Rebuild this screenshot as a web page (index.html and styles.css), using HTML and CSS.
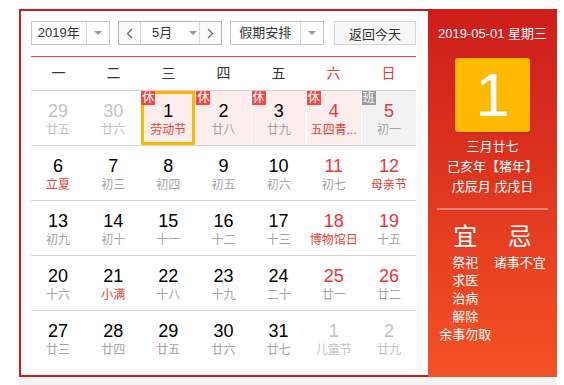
FILE: index.html
```html
<!DOCTYPE html>
<html>
<head>
  <meta charset="utf-8">
  <title>万年历</title>
  <link rel="stylesheet" href="styles.css">
</head>
<body>
  <div class="calendar">
    <div class="main">
      <div class="toolbar">
        <div class="select year">
          <span class="select-text">2019年</span>
          <span class="select-arrow"><i class="tri"></i></span>
        </div>
        <div class="select month">
          <span class="nav-btn">
            <svg width="7" height="11" viewBox="0 0 7 11"><polyline points="6,1 1.5,5.5 6,10" fill="none" stroke="#666" stroke-width="1.2"/></svg>
          </span>
          <span class="month-text">5月<i class="tri"></i></span>
          <span class="nav-btn right">
            <svg width="7" height="11" viewBox="0 0 7 11"><polyline points="1,1 5.5,5.5 1,10" fill="none" stroke="#666" stroke-width="1.2"/></svg>
          </span>
        </div>
        <div class="select holiday">
          <span class="select-text">假期安排</span>
          <span class="select-arrow"><i class="tri"></i></span>
        </div>
        <button class="today-btn">返回今天</button>
      </div>

      <div class="weekdays">
        <span>一</span><span>二</span><span>三</span><span>四</span><span>五</span>
        <span class="red">六</span><span class="red">日</span>
      </div>

      <div class="weeks">
        <div class="week">
          <div class="day other"><b>29</b><em>廿五</em></div>
          <div class="day other"><b>30</b><em>廿六</em></div>
          <div class="day rest selected"><i class="tag">休</i><b>1</b><em class="fest">劳动节</em></div>
          <div class="day rest"><i class="tag">休</i><b>2</b><em>廿八</em></div>
          <div class="day rest"><i class="tag">休</i><b>3</b><em>廿九</em></div>
          <div class="day rest weekend"><i class="tag">休</i><b>4</b><em class="fest" title="五四青年节">五四青...</em></div>
          <div class="day work weekend"><i class="tag">班</i><b>5</b><em>初一</em></div>
        </div>
        <div class="week">
          <div class="day"><b>6</b><em class="fest">立夏</em></div>
          <div class="day"><b>7</b><em>初三</em></div>
          <div class="day"><b>8</b><em>初四</em></div>
          <div class="day"><b>9</b><em>初五</em></div>
          <div class="day"><b>10</b><em>初六</em></div>
          <div class="day weekend"><b>11</b><em>初七</em></div>
          <div class="day weekend"><b>12</b><em class="fest">母亲节</em></div>
        </div>
        <div class="week">
          <div class="day"><b>13</b><em>初九</em></div>
          <div class="day"><b>14</b><em>初十</em></div>
          <div class="day"><b>15</b><em>十一</em></div>
          <div class="day"><b>16</b><em>十二</em></div>
          <div class="day"><b>17</b><em>十三</em></div>
          <div class="day weekend"><b>18</b><em class="fest">博物馆日</em></div>
          <div class="day weekend"><b>19</b><em>十五</em></div>
        </div>
        <div class="week">
          <div class="day"><b>20</b><em>十六</em></div>
          <div class="day"><b>21</b><em class="fest">小满</em></div>
          <div class="day"><b>22</b><em>十八</em></div>
          <div class="day"><b>23</b><em>十九</em></div>
          <div class="day"><b>24</b><em>二十</em></div>
          <div class="day weekend"><b>25</b><em>廿一</em></div>
          <div class="day weekend"><b>26</b><em>廿二</em></div>
        </div>
        <div class="week">
          <div class="day"><b>27</b><em>廿三</em></div>
          <div class="day"><b>28</b><em>廿四</em></div>
          <div class="day"><b>29</b><em>廿五</em></div>
          <div class="day"><b>30</b><em>廿六</em></div>
          <div class="day"><b>31</b><em>廿七</em></div>
          <div class="day other"><b>1</b><em>儿童节</em></div>
          <div class="day other"><b>2</b><em>廿九</em></div>
        </div>
      </div>
    </div>

    <div class="side">
      <div class="side-date">2019-05-01 星期三</div>
      <div class="big-day">1</div>
      <div class="lunar">
        <div>三月廿七</div>
        <div>己亥年【猪年】</div>
        <div>戊辰月 戊戌日</div>
      </div>
      <div class="side-line"></div>
      <div class="almanac">
        <div class="col">
          <div class="col-title">宜</div>
          <div>祭祀</div>
          <div>求医</div>
          <div>治病</div>
          <div>解除</div>
          <div>余事勿取</div>
        </div>
        <div class="col">
          <div class="col-title">忌</div>
          <div>诸事不宜</div>
        </div>
      </div>
    </div>
  </div>
  <div class="footer"></div>
</body>
</html>
```

FILE: styles.css
```css
body {
  margin: 0;
  background: #fff;
  font-family: 'Liberation Sans', 'Noto Sans CJK SC', sans-serif;
  color: #333;
}

.calendar {
  display: flex;
  width: 538px;
  height: 368px;
  margin: 9px 0 0 19px;
}

.main {
  width: 409px;
  border: 2px solid #d01a1c;
  border-right: none;
  padding: 10px 12px 0 10px;
  box-sizing: border-box;
}

/* toolbar */
.toolbar {
  display: flex;
  align-items: center;
  height: 24px;
  padding-bottom: 11px;
  border-bottom: 1px solid #ee4a3a;
}

.select {
  display: flex;
  height: 24px;
  border: 1px solid #c6c6c6;
  box-sizing: border-box;
  font-size: 13px;
  line-height: 22px;
  background: #fff;
}

.select-text {
  text-align: center;
  border-right: 1px solid #d8d8d8;
}

.select-arrow {
  display: flex;
  align-items: center;
  justify-content: center;
  width: 23px;
}

.tri {
  display: inline-block;
  width: 0;
  height: 0;
  border-left: 4px solid transparent;
  border-right: 4px solid transparent;
  border-top: 4px solid #999;
}

.year { width: 79px; margin-right: 8px; }
.year .select-text { width: 55px; }

.month { width: 104px; margin-right: 8px; border-color: #b4b4b4; }
.nav-btn {
  display: flex;
  align-items: center;
  justify-content: center;
  width: 21px;
  border-right: 1px solid #d8d8d8;
  background: #fafafa;
}
.nav-btn.right {
  border-right: none;
  border-left: 1px solid #d8d8d8;
}
.month-text {
  flex: 1;
  display: flex;
  align-items: center;
  padding-left: 11px;
  gap: 17px;
}

.holiday { width: 94px; margin-right: 10px; }
.holiday .select-text { width: 70px; }

.today-btn {
  width: 82px;
  height: 24px;
  border: 1px solid #d6d6d6;
  background: #f6f6f6;
  font-family: inherit;
  font-size: 13px;
  color: #333;
  padding: 0;
}

/* grid */
.weekdays {
  display: grid;
  grid-template-columns: repeat(7, 1fr);
  height: 33px;
  line-height: 33px;
  text-align: center;
  font-size: 14px;
  color: #333;
  border-bottom: 1px solid #cfcfcf;
}

.weekdays .red { color: #e8363a; }

.week {
  display: grid;
  grid-template-columns: repeat(7, 1fr);
  column-gap: 1px;
  border-bottom: 1px solid #d4d4d4;
}

.week:last-child { border-bottom: none; }

.day {
  position: relative;
  height: 54px;
  padding-top: 9px;
  box-sizing: border-box;
  text-align: center;
}

.day b {
  display: block;
  font-weight: normal;
  font-size: 18px;
  line-height: 22px;
  color: #000;
}

.day em {
  display: block;
  font-style: normal;
  font-size: 12px;
  line-height: 16px;
  color: #a3a3a3;
  white-space: nowrap;
}

.day.weekend b { color: #e8363a; }
.day em.fest { color: #e8402f; }

.day.other b,
.day.other em { color: #c2c2c2; }

.day.rest { background: #fdeeed; }
.day.work { background: #f2f2f2; }

.day.selected { box-shadow: inset 0 0 0 3px #ffb800; }

.tag {
  position: absolute;
  left: 0;
  top: 0;
  width: 14px;
  height: 14px;
  font-style: normal;
  font-size: 12px;
  line-height: 14px;
  text-align: center;
  color: #fff;
  background: #f24b45;
}

.day.work .tag { background: #9a9a9a; }

/* side panel */
.side {
  width: 129px;
  height: 368px;
  padding: 15px 10px 0;
  box-sizing: border-box;
  background: linear-gradient(#cc1d1c, #f45225);
  color: #fff;
  text-align: center;
}

.side-date {
  margin: 0 -10px;
  font-size: 13px;
  line-height: 20px;
  white-space: nowrap;
}

.big-day {
  width: 75px;
  height: 74px;
  margin: 14px auto 0;
  background: #ffb900;
  border-radius: 3px;
  box-shadow: 0 1px 3px rgba(120, 0, 0, 0.25);
  font-size: 62px;
  line-height: 74px;
}

.lunar {
  margin-top: 5px;
  font-size: 13px;
  line-height: 20px;
}

.side-line {
  height: 2px;
  margin: 11px -1px 0;
  background: rgba(255, 255, 255, 0.4);
}

.almanac {
  display: flex;
  margin-top: 12px;
}

.col {
  width: 50%;
  font-size: 13px;
  line-height: 18px;
  white-space: nowrap;
}

.col-title {
  font-size: 24px;
  line-height: 30px;
  margin-bottom: 2px;
}

.footer {
  width: 538px;
  height: 10px;
  margin: 1px 0 0 19px;
  background: #f4f4f4;
}
```
